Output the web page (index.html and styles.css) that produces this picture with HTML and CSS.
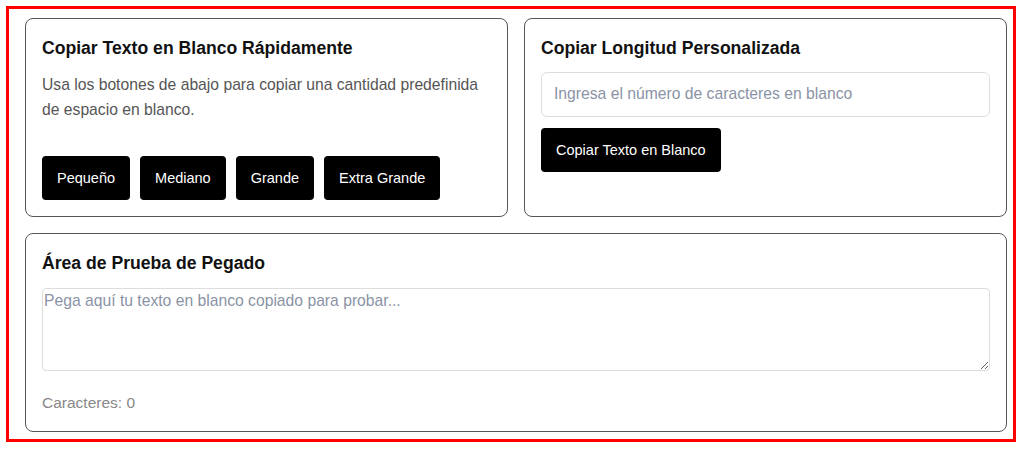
FILE: index.html
```html
<!DOCTYPE html>
<html lang="es">
<head>
<meta charset="utf-8">
<title>Copiar Texto en Blanco</title>
<link rel="stylesheet" href="styles.css">
</head>
<body>
<div class="frame">
  <div class="top-grid">
    <section class="card">
      <h2 class="card-title">Copiar Texto en Blanco Rápidamente</h2>
      <p class="card-desc">Usa los botones de abajo para copiar una cantidad predefinida de espacio en blanco.</p>
      <div class="btn-row">
        <button class="btn">Pequeño</button>
        <button class="btn">Mediano</button>
        <button class="btn">Grande</button>
        <button class="btn">Extra Grande</button>
      </div>
    </section>
    <section class="card">
      <h2 class="card-title">Copiar Longitud Personalizada</h2>
      <input class="field" type="number" placeholder="Ingresa el número de caracteres en blanco">
      <button class="btn">Copiar Texto en Blanco</button>
    </section>
  </div>
  <section class="card card-wide">
    <h2 class="card-title">Área de Prueba de Pegado</h2>
    <textarea class="paste" placeholder="Pega aquí tu texto en blanco copiado para probar..."></textarea>
    <p class="count">Caracteres: 0</p>
  </section>
</div>
</body>
</html>
```
FILE: styles.css
```css
* {
  box-sizing: border-box;
}

html, body {
  margin: 0;
  padding: 0;
  background: #ffffff;
}

body {
  font-family: "Liberation Sans", Arial, sans-serif;
  color: #111111;
}

.frame {
  margin: 6px;
  width: 1010px;
  border: 3px solid #ff0000;
  padding: 9px 6px 7px 16px;
  display: flex;
  flex-direction: column;
  gap: 16px;
}

.top-grid {
  display: grid;
  grid-template-columns: 1fr 1fr;
  gap: 16px;
}

.card {
  border: 1px solid #555555;
  border-radius: 8px;
  padding: 16px;
  background: #ffffff;
}

.card-title {
  margin: 0 0 12px;
  padding-top: 1px;
  font-size: 17.6px;
  line-height: 24.6px;
  font-weight: 700;
  color: #111111;
}

.card-desc {
  margin: -1px 0 33px;
  font-size: 15.7px;
  line-height: 25.6px;
  color: #555555;
}

.btn-row {
  display: flex;
  gap: 10px;
}

.btn {
  display: block;
  height: 44px;
  padding: 0 15px;
  background: #000000;
  color: #ffffff;
  border: none;
  border-radius: 4px;
  font-family: "Liberation Sans", Arial, sans-serif;
  font-size: 14.5px;
  cursor: pointer;
}

.field {
  display: block;
  width: 100%;
  height: 45px;
  margin: -1px 0 11px;
  padding: 0 12px;
  border: 1px solid #dddddd;
  border-radius: 6px;
  font-family: "Liberation Sans", Arial, sans-serif;
  font-size: 15.7px;
  color: #111111;
  outline: none;
}

.field::placeholder,
.paste::placeholder {
  color: #8a93a5;
}

.paste {
  display: block;
  width: 100%;
  height: 83px;
  margin: 13px 0 20px;
  padding: 2px 1px;
  border: 1px solid #dddddd;
  border-radius: 4px;
  font-family: "Liberation Sans", Arial, sans-serif;
  font-size: 15.7px;
  line-height: 20px;
  color: #111111;
  resize: vertical;
  outline: none;
}

.card-wide .card-title {
  margin-bottom: 0;
}

.count {
  margin: 0;
  font-size: 15.5px;
  line-height: 24px;
  color: #888888;
}
```
